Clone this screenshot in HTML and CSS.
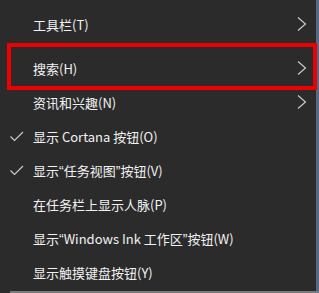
FILE: index.html
```html
<!DOCTYPE html>
<html>
<head>
<meta charset="utf-8">
<link rel="stylesheet" href="styles.css">
</head>
<body>
<div class="screen">
  <div class="menu">
    <div class="item"><span class="label">工具栏(T)</span><svg class="chev" width="10" height="14" viewBox="0 0 10 14"><polyline points="1,0.5 8.5,7 1,13.5" fill="none" stroke="#d0d0d0" stroke-width="1.1"/></svg></div>
    <div class="sep"></div>
    <div class="item"><span class="label">搜索(H)</span><svg class="chev" width="10" height="14" viewBox="0 0 10 14"><polyline points="1,0.5 8.5,7 1,13.5" fill="none" stroke="#d0d0d0" stroke-width="1.1"/></svg></div>
    <div class="item"><span class="label">资讯和兴趣(N)</span><svg class="chev" width="10" height="14" viewBox="0 0 10 14"><polyline points="1,0.5 8.5,7 1,13.5" fill="none" stroke="#d0d0d0" stroke-width="1.1"/></svg></div>
    <div class="item"><svg class="check" width="14" height="11" viewBox="0 0 14 11"><polyline points="0.5,5.5 4.5,9.5 13,1" fill="none" stroke="#d0d0d0" stroke-width="1.1"/></svg><span class="label">显示 Cortana 按钮(O)</span></div>
    <div class="item"><svg class="check" width="14" height="11" viewBox="0 0 14 11"><polyline points="0.5,5.5 4.5,9.5 13,1" fill="none" stroke="#d0d0d0" stroke-width="1.1"/></svg><span class="label">显示<span class="q">“</span>任务视图<span class="q">”</span>按钮(V)</span></div>
    <div class="item"><span class="label">在任务栏上显示人脉(P)</span></div>
    <div class="item"><span class="label">显示<span class="q">“</span>Windows Ink 工作区<span class="q">”</span>按钮(W)</span></div>
    <div class="item"><span class="label">显示触摸键盘按钮(Y)</span></div>
    <div class="highlight"></div>
  </div>
  <div class="edge"></div>
  <div class="desk"></div>
</div>
<div class="bottom"></div>
</body>
</html>
```
FILE: styles.css
```css
html, body {
  margin: 0;
  padding: 0;
  background: #2b2b2b;
  width: 319px;
  height: 293px;
  overflow: hidden;
}
.screen {
  display: flex;
  height: 291px;
}
.menu {
  position: relative;
  width: 316px;
  padding-top: 7px;
  box-sizing: border-box;
  background: #2b2b2b;
  font-family: "Noto Sans CJK SC", "Noto Sans", sans-serif;
  font-size: 13px;
  color: #f2f2f2;
}
.item {
  position: relative;
  height: 34px;
  display: flex;
  align-items: center;
  padding-left: 33px;
}
.q {
  font-family: "Liberation Sans", sans-serif;
  font-size: 14px;
}
.sep {
  height: 10px;
}
.check {
  position: absolute;
  left: 10px;
  top: 12px;
}
.chev {
  position: absolute;
  left: 297px;
  top: 10px;
}
.highlight {
  position: absolute;
  left: 7px;
  top: 43px;
  width: 310px;
  height: 47px;
  box-sizing: border-box;
  border: 4px solid #ec0000;
}
.edge {
  width: 1px;
  background: #6a6a6a;
}
.desk {
  flex: 1;
  background: #4d6a8a;
}
.bottom {
  height: 2px;
  background: #7a7a7a;
  margin-left: 10px;
}
```
